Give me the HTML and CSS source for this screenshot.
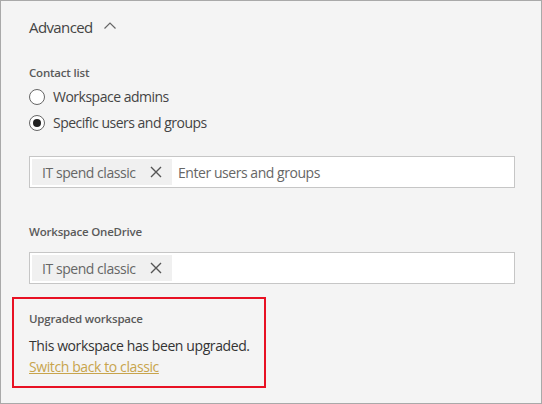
FILE: index.html
```html
<!DOCTYPE html>
<html>
<head>
<meta charset="utf-8">
<link rel="stylesheet" href="styles.css">
</head>
<body>
<div class="panel">
  <div class="adv">
    <span>Advanced</span>
    <svg class="chev" width="14" height="10" viewBox="0 0 14 10"><path d="M1.5 7.5 L7 2 L12.5 7.5" fill="none" stroke="#666" stroke-width="1.2"/></svg>
  </div>

  <div class="label l-contact">Contact list</div>
  <div class="radio r1"><span class="circle"></span><span>Workspace admins</span></div>
  <div class="radio r2"><span class="circle checked"></span><span>Specific users and groups</span></div>

  <div class="input i1">
    <span class="chip">IT spend classic
      <svg class="x" width="12" height="12" viewBox="0 0 12 12"><path d="M1 1 L11 11 M11 1 L1 11" stroke="#555" stroke-width="1.4"/></svg>
    </span>
    <span class="placeholder">Enter users and groups</span>
  </div>

  <div class="label l-drive">Workspace OneDrive</div>
  <div class="input i2">
    <span class="chip">IT spend classic
      <svg class="x" width="12" height="12" viewBox="0 0 12 12"><path d="M1 1 L11 11 M11 1 L1 11" stroke="#555" stroke-width="1.4"/></svg>
    </span>
  </div>

  <div class="upgraded">
    <div class="label">Upgraded workspace</div>
    <div class="msg">This workspace has been upgraded.</div>
    <a class="link" href="#">Switch back to classic</a>
  </div>
</div>
</body>
</html>
```

FILE: styles.css
```css
html, body {
  margin: 0;
  padding: 0;
  background: #ffffff;
}
.panel {
  width: 542px;
  height: 404px;
  box-sizing: border-box;
  border: 1px solid #a9a9a9;
  background: #f4f4f4;
  padding: 15px 0 0 28px;
  font-family: "Open Sans", "Noto Sans", sans-serif;
  color: #333;
  overflow: hidden;
}
.adv {
  display: flex;
  align-items: center;
  gap: 10px;
  font-size: 15px;
  line-height: 22px;
  letter-spacing: -0.6px;
  color: #444;
}
.chev {
  margin-top: -2px;
}
.label {
  font-size: 11.5px;
  font-weight: 600;
  color: #5a5a5a;
  line-height: 16px;
  letter-spacing: -0.2px;
}
.l-contact {
  margin-top: 27px;
}
.radio {
  display: flex;
  align-items: center;
  gap: 8px;
  font-size: 14px;
  line-height: 20px;
  letter-spacing: -0.5px;
  color: #444;
}
.r1 { margin-top: 6px; }
.r2 { margin-top: 6px; }
.circle {
  width: 16px;
  height: 16px;
  box-sizing: border-box;
  border: 1px solid #666;
  border-radius: 50%;
  background: #fff;
  display: flex;
  align-items: center;
  justify-content: center;
}
.circle.checked::after {
  content: "";
  width: 8px;
  height: 8px;
  border-radius: 50%;
  background: #222;
}
.input {
  width: 486px;
  height: 32px;
  box-sizing: border-box;
  border: 1px solid #c6c6c6;
  background: #fff;
  display: flex;
  align-items: center;
  padding-left: 2px;
  font-size: 14px;
  letter-spacing: -0.45px;
  color: #666;
}
.i1 { margin-top: 23px; }
.chip {
  height: 26px;
  width: 140px;
  box-sizing: border-box;
  background: #f0f0f0;
  display: flex;
  align-items: center;
  padding-left: 10px;
  gap: 14px;
  color: #666;
}
.placeholder {
  margin-left: 6px;
  color: #666;
}
.l-drive {
  margin-top: 36px;
}
.i2 { margin-top: 12px; }
.upgraded {
  margin-top: 13px;
  margin-left: -17px;
  width: 254px;
  height: 91px;
  box-sizing: border-box;
  border: 2px solid #e81123;
  padding: 12px 0 0 15px;
}
.upgraded .label {
  margin-bottom: 9px;
}
.msg {
  font-size: 14px;
  line-height: 19px;
  letter-spacing: -0.4px;
  color: #333;
}
.link {
  display: inline-block;
  font-size: 14px;
  line-height: 19px;
  letter-spacing: -0.4px;
  color: #c8a44c;
  text-decoration: underline;
}
```
